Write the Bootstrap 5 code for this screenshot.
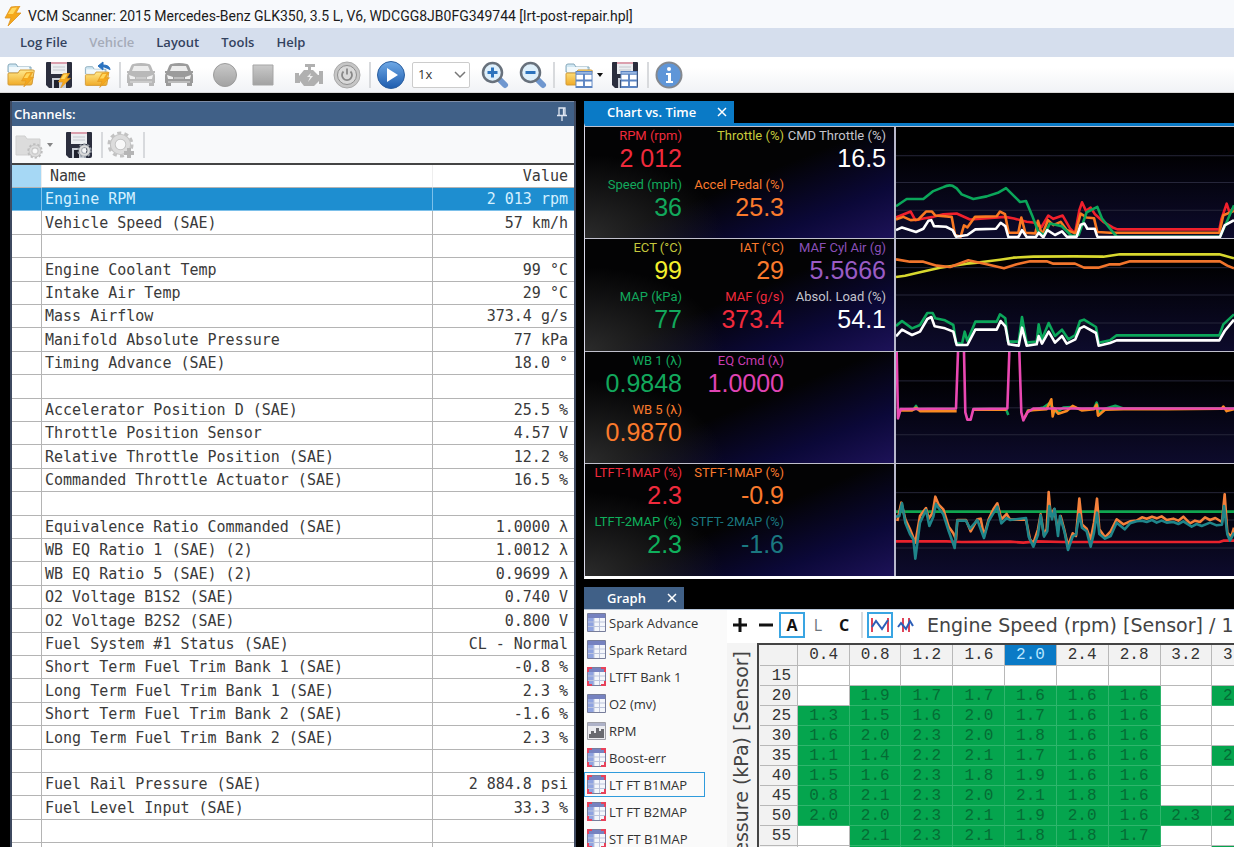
<!DOCTYPE html>
<html lang="en">
<head>
<meta charset="utf-8">
<meta name="viewport" content="width=device-width, initial-scale=1">
<title>VCM Scanner</title>
<link href="https://cdn.jsdelivr.net/npm/bootstrap@5.3.0/dist/css/bootstrap.min.css" rel="stylesheet">
<style>
:root { --ui: "Open Sans", "Noto Sans", sans-serif; --mono: "DejaVu Sans Mono", monospace; }
body { font-family: var(--ui); background: #000; color: #222; height: 100vh; overflow: hidden; }
button { border: 0; background: none; padding: 0; }
.titlebar { height: 28px; background: #f7f9fc; font: 14px/28px Roboto, "Noto Sans", sans-serif; padding: 2px 0 0 3px; gap: 5px; color: #1b1b1b; }
.menubar { height: 29px; background: #d5deed; padding-left: 20px; gap: 22px; }
.menubar a { font: 600 13px/28px var(--ui); color: #33425e; text-decoration: none; }
.menubar a.off { color: #a5abb8; }
.tools { height: 36px; background: linear-gradient(#fff 30%, #f1f3f6); padding-left: 7px; border-bottom: 1px solid #d8d8d8; }
.tools svg, .subtools svg { display: block; width: 28px; height: 28px; }
.group { display: flex; align-items: center; gap: 10px; }
.vsep { width: 2px; height: 26px; background: #d8dadd; margin: 0 6px; flex: none; }
.speed { width: 58px; height: 26px; border: 1px solid #ccc; border-radius: 2px; background: #fff; font-size: 13px; padding: 0 0 0 5px; appearance: none; color: #333; }
.pick { position: relative; margin: 0 11px 0 7px; }
.pick svg { position: absolute; right: 4px; top: 8px; width: 12px; height: 10px; pointer-events: none; }
.caret { width: 0; height: 0; border: 3px solid transparent; border-top: 4px solid #111; border-bottom: 0; }
.work { display: grid; grid-template-columns: 566fr 650fr; gap: 8px; padding: 8px 0 0 10px; flex: 1 1 0; min-height: 0; }
.work > * { min-width: 0; min-height: 0; overflow: hidden; }
.channels { border: 0 solid #3f4a60; border-width: 0 2px; background: #fff; }
.phead { height: 25px; background: #406087; color: #fff; font: 600 13px/25px var(--ui); padding: 0 8px 0 4px; margin: 0 -2px; border-top: 1px solid #7e8ea8; }
.subtools { height: 37px; background: #f8f9fa; padding-left: 3px; border-bottom: 0; }
.chan { width: 100%; table-layout: fixed; border-collapse: separate; border-spacing: 0; border-top: 2px solid #444; font: 15px/20px var(--mono); color: #3a3a3a; }
.chan td, .chan th { height: 23px; padding: 0 3px; font-weight: 400; border: 0 solid #b4b4b4; border-width: 0 0 1px 1px; white-space: nowrap; overflow: hidden; vertical-align: middle; }
.chan tbody tr:nth-child(5n+2) td, .chan tbody tr:nth-child(5n+4) td { height: 24px; }
.chan td:first-child, .chan th:first-child { border-left: 0; width: 29px; }
.chan th:first-child { background: #a6d8f5; }
.chan th { border-left-color: #eee; }
.chan th:nth-child(2) { padding-left: 8px; }
.chan .val { width: 142px; text-align: right; padding-right: 6px; }
.chan tr.sel td { background: #1e8ed0; color: #d4f0ff; border-color: #7cc0ea; }
.dtab { height: 22px; font: 600 13px/22px var(--ui); color: #fff; padding: 0 6px 0 23px; background: #0a7ac6; }
.dtab.idle { background: #406087; }
.dtab svg { width: 12px; height: 12px; display: block; }
.charts { border-top: 3px solid #0a7ac6; border-left: 1px solid #d8d8e8; border-bottom: 3px solid #fff; }
.strip { height: 112px; border-top: 1px solid #c0c0cc; display: flex; box-sizing: content-box; }
.strip:nth-child(odd) { height: 111px; }
.gauges { width: 311px; flex: none; border-right: 2px solid #b8b8cc; display: grid; grid-template-columns: repeat(3, 102px); justify-content: end; align-content: start; padding-right: 8px; text-align: right; white-space: nowrap;
  background: radial-gradient(ellipse 45% 75% at 0 100%, #2b2b2b, transparent), linear-gradient(158deg, transparent 50%, #0b0838 78%, #1d1258 100%), #030304; }
.gauge { direction: rtl; height: 49px; overflow: visible; }
.gauge > * { direction: ltr; display: block; }
.gauge dt { font: 400 13px/17px Roboto, "Liberation Sans", sans-serif; }
.gauge dd { font: 400 25px/29px "Liberation Sans", sans-serif; margin: 0; }
.plot { flex: 1 1 0; min-width: 0; background: linear-gradient(#000 20%, #0d0b2c); }
.plot svg { display: block; width: 100%; height: 100%; }
.plot path { fill: none; stroke-width: 2.6; stroke-linejoin: round; vector-effect: non-scaling-stroke; }
.plot path.ln { stroke: #26263a; stroke-width: 1; }
.graph { background: #fafafa; border-top: 1px solid #b9c6d8; flex: 1 1 0; min-height: 0; overflow: hidden; }
.glist { width: 143px; flex: none; }
.glist button { display: flex; align-items: center; gap: 3px; width: 121px; height: 25px; margin-bottom: 2px; padding-left: 2px; border: 1px solid transparent; font: 13px/22px var(--ui); color: #333; white-space: nowrap; text-align: left; }
.glist button.on { border-color: #2f9bdc; }
.glist svg { width: 19px; height: 19px; flex: none; }
.gtools { height: 33px; background: #fff; padding-bottom: 4px; white-space: nowrap; }
.gtools button { width: 26px; height: 26px; font: 700 16px/22px var(--ui); color: #111; flex: none; }
.gtools button.on { border: 2px solid #3aa5e2; }
.gtools svg { display: block; margin: auto; width: 20px; height: 20px; }
.axis { font: 19px/24px "DejaVu Sans", sans-serif; color: #444; white-space: nowrap; }
.side { width: 30px; flex: none; overflow: hidden; background: #f4f4f4; padding: 8px 0 0 2px; }
.side span { writing-mode: vertical-rl; transform: rotate(180deg); }
.gridwrap { border: solid #444; border-width: 2px 0 0 2px; overflow: hidden; flex: 1 1 0; min-width: 0; padding-left: 1px; background: #f0f0f0; }
.cells { table-layout: fixed; width: 504px; border-collapse: separate; border-spacing: 0; font: 16px/18px "Liberation Mono", monospace; }
.cells th, .cells td { height: 20px; padding: 0; text-align: center; font-weight: 400; border: 0 solid #b8b8b8; border-width: 0 1px 1px 0; width: 52px; background: #fff; color: #333; }
.cells thead th { height: 21px; background: #f2f2f2; }
.cells thead th.hot { background: #0a7ac6; color: #b8e6ff; }
.cells th:nth-child(3n) , .cells td:nth-child(3n) { width: 51px; }
.cells th:first-child { width: 38px; background: #f2f2f2; text-align: right; padding-right: 6px; font-size: 16px; }
.cells td.fill { background: #05a54e; border-color: #2fb56c; color: #056c35; }
</style>
</head>
<body class="d-flex flex-column">
<svg width="0" height="0" class="position-absolute" aria-hidden="true">
  <defs>
    <linearGradient id="yel" x1="0" y1="0" x2="0" y2="1"><stop offset="0" stop-color="#ffe98c"/><stop offset="1" stop-color="#f0ab28"/></linearGradient>
    <linearGradient id="blu" x1="0" y1="0" x2="0" y2="1"><stop offset="0" stop-color="#6fa9e6"/><stop offset="1" stop-color="#1d5cae"/></linearGradient>
    <linearGradient id="gry" x1="0" y1="0" x2="0" y2="1"><stop offset="0" stop-color="#c9c9c9"/><stop offset="1" stop-color="#a2a2a2"/></linearGradient>
    <symbol id="bolt" viewBox="0 0 20 20"><path d="M8 1l9-1-4 7h5L5 20l3-8H2z" fill="#f5a81c" stroke="#dd9422" stroke-width=".8"/><path d="M9 2l5-.5-4 6.500H5z" fill="#ffd75e"/></symbol>
    <symbol id="folder" viewBox="0 0 28 28"><path d="M1 5q0-2 2-2h6l2 3h13v5H1z" fill="#cfe6f2" stroke="#86a8ba"/><path d="M2 6h20v5H2z" fill="#f1f8fb"/><path d="M1 23V13q0-1 1-1h9l2-3h13q2 0 1 2l-2 12q0 1-2 1H2q-1 0-1-1z" fill="url(#yel)" stroke="#d39a35"/></symbol>
    <symbol id="disk" viewBox="0 0 28 28"><path d="M2 1h24q1 0 1 1v23q0 2-2 2H4l-3-3V2q0-1 1-1z" fill="#2b2e3d"/><path d="M6 1h16v12H6z" fill="#eceef1"/><path d="M6 1h16v2H6z" fill="#dba0ae"/><path d="M8 6h12M8 9h12" stroke="#c4c8ce"/><path d="M7 17h14v10H7z" fill="#c9ced6"/><path d="M9 19h5v8H9z" fill="#20222e"/></symbol>
    <symbol id="car" viewBox="0 0 28 28"><path d="M6 3q8-2 16 0 1 0 2 2l2 5h2v2h-1q1 1 1 3v7h-1v3h-5v-3H6v3H1v-3H0v-7q0-2 1-3H0v-2h2l2-5q1-2 2-2z" fill="currentColor"/><path d="M7 5h14l2 5H5z" fill="#ececec"/><path d="M2 14l6 2v2H3zM26 14l-6 2v2h5z" fill="#f0f0f0"/><path d="M9 17h10M3 21h22" stroke="#ddd"/></symbol>
    <symbol id="lens" viewBox="0 0 28 28"><path d="M19 19l5 5" stroke="#6f97cf" stroke-width="6" stroke-linecap="round"/><circle cx="11.500" cy="11.500" r="9.500" fill="#dff0fb" stroke="#68717c" stroke-width="2.500"/><path d="M6.500 11.500h10" stroke="#2d73bd" stroke-width="3"/></symbol>
    <symbol id="sheet" viewBox="0 0 18 18"><path d="M0 0h18v18H0z" fill="#5b84c2"/><path d="M1 4h7v5H1zM10 4h7v5h-7zM1 11h7v5H1zM10 11h7v5h-7z" fill="#fff"/><path d="M1 2h16" stroke="#a9c4ea" stroke-width="1.500"/></symbol>
    <symbol id="cog" viewBox="0 0 28 28"><circle cx="14" cy="14" r="12" fill="none" stroke="currentColor" stroke-width="3" stroke-dasharray="4.200 3.340"/><circle cx="14" cy="14" r="8" fill="none" stroke="currentColor" stroke-width="6"/><circle cx="14" cy="14" r="8" fill="none" stroke="#dcdcdc" stroke-width="4"/><circle cx="14" cy="14" r="4" fill="#f8f8f8"/></symbol>
    <symbol id="tbl" viewBox="0 0 19 19"><path d="M.5.5h18v18H.5z" fill="#f4f6fb" stroke="#777d9a"/><path d="M1 1h17v4H1z" fill="#7682c0"/><path d="M1 5h6v13H1z" fill="#8fa3e0"/><path d="M1 9h17M1 13.500h17M7 5v13M12.500 5v13" stroke="#bcc4dc"/></symbol>
    <symbol id="tblr" viewBox="0 0 19 19"><use href="#tbl"/><path d="M0 0h5v2H2v3H0zM19 0h-5v2h3v3h2zM0 19h5v-2H2v-3H0zM19 19h-5v-2h3v-3h2z" fill="#e8415a"/></symbol>
    <symbol id="hist" viewBox="0 0 19 19"><path d="M.5 1.500h18v17H.5z" fill="#ececf0" stroke="#a0a0a8"/><path d="M1 2h17v3H1z" fill="#aeb2c8"/><path d="M2 17v-4h2v-3h3v2h2V7h3v3h2v-2h3v9z" fill="#6a6a70"/></symbol>
    <symbol id="x" viewBox="0 0 12 12"><path d="M2 2l8 8M10 2l-8 8" stroke="currentColor" stroke-width="1.500"/></symbol>
  </defs>
</svg>

<header class="flex-shrink-0">
  <div class="titlebar d-flex"><svg width="20" height="20" class="mt-1" aria-hidden="true"><use href="#bolt"/></svg><span>VCM Scanner: 2015 Mercedes-Benz GLK350, 3.5 L, V6, WDCGG8JB0FG349744 [lrt-post-repair.hpl]</span></div>
  <nav class="menubar d-flex" aria-label="Main">
    <a href="#">Log File</a><a href="#" class="off">Vehicle</a><a href="#">Layout</a><a href="#">Tools</a><a href="#">Help</a>
  </nav>
  <div class="tools d-flex align-items-center">
    <div class="group">
      <button aria-label="Open log"><svg viewBox="0 0 28 28"><use href="#folder"/><use href="#bolt" x="13" y="10" width="15" height="17"/></svg></button>
      <button aria-label="Save log"><svg viewBox="0 0 28 28"><use href="#disk"/><use href="#bolt" x="12" y="12" width="15" height="15"/></svg></button>
      <button aria-label="Export log"><svg viewBox="0 0 28 28"><use href="#folder" y="3" width="28" height="25"/><path d="M27 9q0-5-7-5V1l-5 4 5 4V6" fill="#2b73c0" stroke="#2b73c0"/><use href="#bolt" x="13" y="11" width="15" height="16"/></svg></button>
    </div>
    <span class="vsep ms-2"></span>
    <div class="group">
      <button aria-label="Connect" style="color:#b9b9b9"><svg><use href="#car"/></svg></button>
      <button aria-label="Vehicle info" style="color:#9b9b9b"><svg><use href="#car"/></svg></button>
      <button aria-label="Record" class="ms-2"><svg viewBox="0 0 28 28"><circle cx="14" cy="14" r="11.500" fill="url(#gry)" stroke="#9c9c9c"/></svg></button>
      <button aria-label="Stop"><svg viewBox="0 0 28 28"><path d="M4 4h20v20H4z" fill="url(#gry)" stroke="#a5a5a5"/></svg></button>
      <button aria-label="Engine codes" class="ms-2"><svg viewBox="0 0 28 28"><path d="M10 3h10v3h-4v3h2l5 5h1v-4h4v13h-4v-3l-5 5H9l-4-5v2H0V12h4v3l5-6h4V6h-3z" fill="#b0b0b0"/><path d="M16 12l-4 4h3l-2 5 5-6h-3z" fill="#eee"/></svg></button>
      <button aria-label="Power"><svg viewBox="0 0 28 28"><circle cx="14" cy="14" r="13" fill="#c6c6c6" stroke="#aaa"/><circle cx="14" cy="14" r="9.500" fill="#d9d9d9" stroke="#8f8f8f"/><path d="M10.500 10.500a5 5 0 107 0M14 7.500v6" fill="none" stroke="#888" stroke-width="1.800"/></svg></button>
    </div>
    <span class="vsep ms-2"></span>
    <button aria-label="Play"><svg viewBox="0 0 28 28"><circle cx="14" cy="14" r="13.500" fill="url(#blu)" stroke="#2c5f9f"/><path d="M10 7l11 7-11 7z" fill="#fff"/></svg></button>
    <div class="pick"><select class="speed d-block" aria-label="Playback speed"><option>1x</option></select><svg viewBox="0 0 12 10" aria-hidden="true"><path d="M1 2l5 5 5-5" fill="none" stroke="#777" stroke-width="1.500"/></svg></div>
    <div class="group">
      <button aria-label="Zoom in"><svg viewBox="0 0 28 28"><use href="#lens"/><path d="M11.500 6.500v10" stroke="#2d73bd" stroke-width="3"/></svg></button>
      <button aria-label="Zoom out"><svg><use href="#lens"/></svg></button>
    </div>
    <span class="vsep"></span>
    <button aria-label="Open layout" class="d-flex align-items-center ms-1"><svg viewBox="0 0 28 28"><use href="#folder"/><use href="#sheet" x="10" y="10" width="18" height="17"/></svg><span class="caret ms-1"></span></button>
    <button aria-label="Save layout" class="ms-2"><svg viewBox="0 0 28 28"><use href="#disk"/><use href="#sheet" x="9" y="10" width="18" height="17"/></svg></button>
    <span class="vsep ms-2"></span>
    <button aria-label="Info"><svg viewBox="0 0 28 28"><circle cx="14" cy="14" r="12.500" fill="#5f96d8" stroke="#85898f" stroke-width="2"/><circle cx="14" cy="8" r="2" fill="#fff"/><path d="M11 12h5v8h2v2h-7v-2h2v-6h-2z" fill="#fff"/></svg></button>
  </div>
</header>

<main class="work">
  <section class="channels">
    <div class="phead d-flex justify-content-between align-items-center"><span>Channels:</span>
      <svg width="12" height="14" viewBox="0 0 12 14" aria-hidden="true"><path d="M3 8V1h6v7M1 8.500h10M6 9v5M7.500 1v7" fill="none" stroke="#dfe6f2" stroke-width="1.300"/></svg></div>
    <div class="subtools d-flex align-items-center">
      <button aria-label="Open channel list" class="d-flex align-items-center"><svg viewBox="0 0 28 28" color="#bdbdbd"><path d="M1 5h9l2 3h13v16H1z" fill="#dcdcdc" stroke="#cfcfcf"/><use href="#cog" x="12" y="12" width="16" height="16"/></svg><span class="caret ms-1 opacity-50"></span></button>
      <button aria-label="Save channel list" class="mx-1 ps-2"><svg viewBox="0 0 28 28" color="#9aa0a8"><use href="#disk"/><use href="#cog" x="12" y="12" width="15" height="15"/></svg></button>
      <span class="vsep mx-1"></span>
      <button aria-label="Channel settings"><svg viewBox="0 0 28 28" color="#c2c2c2"><use href="#cog" width="27" height="27"/><path d="M22 17v10M17 22h10" stroke="#b5b5b5" stroke-width="4"/></svg></button>
      <span class="vsep ms-2"></span>
    </div>
    <table class="chan"><thead><tr><th></th><th>Name</th><th class="val">Value</th></tr></thead><tbody id="channels"></tbody></table>
  </section>

  <section class="d-flex flex-column">
    <div class="d-flex flex-shrink-0"><div class="dtab d-flex align-items-center gap-3"><span class="pe-1">Chart vs. Time</span><button aria-label="Close chart" class="text-white"><svg><use href="#x"/></svg></button></div></div>
    <div class="charts flex-shrink-0">
      <div class="strip"><div class="gauges" data-g="RPM (rpm)|2 012|#f02a3c;Throttle (%)||#c8cc3c;CMD Throttle (%)|16.5|#fff|#c4c4cc;Speed (mph)|36|#12a85c;Accel Pedal (%)|25.3|#fa7a2c"></div>
        <div class="plot"><svg viewBox="18 18 1014 336" preserveAspectRatio="none" aria-hidden="true"><path class="ln" d="M18 105H1032M18 186H1032M18 270H1032"/>
        <path stroke="#f0202c" d="M18 292L62 274L76 300L100 295L130 290L160 282L200 280L240 298L345 290L372 295L410 305L435 308L455 320L475 286L490 296L518 286L540 325L555 340L568 270L576 246L588 272L602 262L615 282L640 305L668 322L682 328H988L994 298L1010 250L1018 275L1032 262"/>
        <path stroke="#f97822" d="M18 298L40 290L62 300L85 298L108 274L126 274L136 286L185 290L195 345L212 350L222 316L232 322L255 290L320 288L330 274L345 282L356 338L385 338L394 292L406 338L436 340L444 302L456 345L474 300L490 315L512 305L530 330L556 340L572 280L590 292L612 294L622 336L660 338H988L1000 285L1032 272"/>
        <path stroke="#0bA65A" d="M18 258L50 236H100L130 212L160 200Q175 192 188 196L200 204L215 222L250 236L290 228L326 216L348 203L390 245L408 242L428 290L445 335L462 345L480 310L515 318L545 348L566 345L590 276L622 260L636 295L662 328L680 350H990L1008 310L1032 255"/>
        <path stroke="#fff" d="M18 330L36 322L78 336L100 326L115 302L124 300L132 318L168 320L188 330L198 350L232 345L256 328L318 326L332 308L346 318L355 351L386 350L396 330L410 351L438 350L446 338L460 352L472 330L495 345L516 334L530 350L560 350L572 314L583 310L592 326L614 326L622 350L645 351H990L1004 316L1032 300"/></svg></div></div>
      <div class="strip"><div class="gauges" data-g="ECT (°C)|99|#f4ef2c|#c4c83c;IAT (°C)|29|#fa7a2c;MAF Cyl Air (g)|5.5666|#9a5cc4|#8a50b8;MAP (kPa)|77|#12a85c;MAF (g/s)|373.4|#f02a3c;Absol. Load (%)|54.1|#fff|#c4c4cc"></div>
        <div class="plot"><svg viewBox="18 354 1014 336" preserveAspectRatio="none" aria-hidden="true"><path class="ln" d="M18 440H1032M18 522H1032M18 606H1032"/>
        <path stroke="#d8d82e" d="M18 468L45 464L90 454L150 440L230 428L270 424L330 416L370 410L430 407L550 406L640 407L690 400H988L1032 412"/>
        <path stroke="#f0742c" d="M18 415L60 422H100L140 434L180 438L235 418L290 430L342 442L380 430L420 421H470L490 428H555L582 440H625L660 430H690L720 421H990L1012 434L1032 442"/>
        <path stroke="#0ba65a" d="M18 615L36 600L66 622L90 612L112 576H128L136 592L165 598L190 612L198 665L216 668L224 632L232 660L256 602H320L330 580L346 592L354 662L386 662L396 588L410 665L440 662L446 610L456 655L476 606L495 645L516 626L535 655L556 642L570 600L582 596L618 618L626 665L660 658L680 643H988L1000 610L1032 580"/>
        <path stroke="#fff" d="M18 646L36 626L66 642L90 632L112 594L124 588L134 616L165 622L190 632L200 672L232 672L256 626H320L332 600L346 616L356 670L386 674L396 620L410 674L440 670L446 645L456 668L476 632L495 665L516 645L530 668L556 655L570 622L582 616L618 636L626 674L660 666L680 658H988L1004 630L1032 596"/></svg></div></div>
      <div class="strip"><div class="gauges" data-g="WB 1 (λ)|0.9848|#12a85c;EQ Cmd (λ)|1.0000|#e044b4|#c83cb0;;WB 5 (λ)|0.9870|#fa7a2c"></div>
        <div class="plot"><svg viewBox="18 16 1014 338" preserveAspectRatio="none" aria-hidden="true"><path class="ln" d="M18 104H1032M18 186H1032M18 268H1032"/>
        <path stroke="#0fa65a" d="M28 190L70 192L78 180L84 190H195M250 190H348L355 208M410 196L460 185L478 172L500 200L520 185L545 184L575 190L612 188L620 170L630 205L640 190L676 180L700 188H1032"/>
        <path stroke="#f98a22" d="M28 194H66L78 186L90 196H200M250 192H350M404 215L415 194L470 190L484 160L488 212L494 188L505 204L530 196L548 180L575 194L612 190L620 176L624 210L645 192L700 190L830 190L995 189L1000 182L1010 196L1032 190"/>
        <path stroke="#ea48b2" d="M20 16L24 218L32 190L198 188L204 16M222 16L226 200L232 222L242 222L250 190L352 188L358 16M388 16L394 200L400 224L412 200L430 188H1032"/></svg></div></div>
      <div class="strip"><div class="gauges" data-g="LTFT-1MAP (%)|2.3|#f02a3c;STFT-1MAP (%)|-0.9|#fa7a2c;;LTFT-2MAP (%)|2.3|#0fb05c;STFT- 2MAP (%)|-1.6|#1a7880"></div>
        <div class="plot"><svg viewBox="18 354 1014 336" preserveAspectRatio="none" aria-hidden="true"><path class="ln" d="M18 440H1032M18 522H1032M18 606H1032"/>
        <path stroke="#e8222c" d="M18 586H170L215 588L360 587L400 590L440 586L520 588H988L1000 584H1032"/>
        <path stroke="#10a650" d="M18 497H1032"/>
        <path stroke="#f5813c" d="M22 525L34 470L46 520L60 550L76 590L90 510L108 486L116 518L128 500L136 452L146 476L160 490L176 542L190 562L198 580L202 522H228L242 556L262 520L272 518L282 570L296 520L310 490L322 472L334 520L350 504L360 521H408L420 580L430 592L444 550L452 505L462 568L470 550L476 438L482 510L492 490L504 552L512 510L522 548L534 600L548 562L558 570L568 458L576 535L590 548L602 580L612 530L621 458L628 550L645 574L662 556L680 520L700 535L720 526L740 524L756 514L770 518L786 512L800 517L815 511L830 522L850 518L865 524L880 512L900 532L915 524L930 528L945 514L960 522L976 516L996 528L1004 445L1012 560L1024 572L1032 545"/>
        <path stroke="#1f858a" d="M18 512L28 510L36 472L46 530L60 564L70 580L76 638L90 530L108 492L118 540L130 512L138 474L146 486L160 505L176 555L194 606L202 524H228L240 548L262 522L282 576L296 525L310 502L322 482L334 532L350 516L360 522L408 516L416 572L430 602L444 566L452 508L462 572L472 555L478 480L486 520L494 488L504 570L510 510L524 560L534 612L548 572L558 565L568 505L576 545L590 556L602 602L612 560L621 500L628 564L645 578L662 570L680 530L704 550L720 532L740 526L756 524L770 528L786 522L800 530L815 524L830 530L850 528L865 534L880 526L905 542L920 534L935 540L960 530L980 538L996 536L1002 480L1012 565L1020 584L1032 560"/></svg></div></div>
    </div>
    <div class="d-flex flex-shrink-0 pt-2"><div class="dtab idle d-flex align-items-center gap-3"><span class="pe-1">Graph</span><button aria-label="Close graph" class="text-white"><svg><use href="#x"/></svg></button></div></div>
    <div class="graph d-flex">
      <div class="glist" id="graphs"></div>
      <div class="d-flex flex-column flex-fill" style="min-width:0">
        <div class="gtools d-flex align-items-center flex-shrink-0">
          <button aria-label="Add"><svg viewBox="0 0 20 20"><path d="M10 3v14M3 10h14" stroke="#111" stroke-width="3"/></svg></button>
          <button aria-label="Remove"><svg viewBox="0 0 20 20"><path d="M3 10h14" stroke="#111" stroke-width="3"/></svg></button>
          <button class="on">A</button><button class="text-secondary fw-normal">L</button><button>C</button>
          <span class="vsep mx-1"></span>
          <button class="on" aria-label="Line view"><svg viewBox="0 0 20 20"><path d="M2 3v14M18 3v14" stroke="#e04458" stroke-width="2"/><path d="M2 12l4-6 6 8 6-9" fill="none" stroke="#2d5fb8" stroke-width="2"/></svg></button>
          <button aria-label="Trace view"><svg viewBox="0 0 20 20"><path d="M7 3v14M13 3v14" stroke="#e04458" stroke-width="2"/><path d="M2 12l3-4 5 6 4-8 3 5" fill="none" stroke="#2d5fb8" stroke-width="2"/></svg></button>
          <span class="axis ms-2">Engine Speed (rpm) [Sensor] / 1000</span>
        </div>
        <div class="d-flex flex-fill overflow-hidden" style="min-height:0">
          <div class="side axis"><span>Pressure (kPa) [Sensor]</span></div>
          <div class="gridwrap"><table class="cells"><thead><tr id="cols"></tr></thead><tbody id="rows"></tbody></table></div>
        </div>
      </div>
    </div>
  </section>
</main>

<script src="https://cdn.jsdelivr.net/npm/bootstrap@5.3.0/dist/js/bootstrap.bundle.min.js"></script>
<script>
const channels = `Engine RPM|2 013 rpm
Vehicle Speed (SAE)|57 km/h

Engine Coolant Temp|99 °C
Intake Air Temp|29 °C
Mass Airflow|373.4 g/s
Manifold Absolute Pressure|77 kPa
Timing Advance (SAE)|18.0 °

Accelerator Position D (SAE)|25.5 %
Throttle Position Sensor|4.57 V
Relative Throttle Position (SAE)|12.2 %
Commanded Throttle Actuator (SAE)|16.5 %

Equivalence Ratio Commanded (SAE)|1.0000 λ
WB EQ Ratio 1 (SAE) (2)|1.0012 λ
WB EQ Ratio 5 (SAE) (2)|0.9699 λ
O2 Voltage B1S2 (SAE)|0.740 V
O2 Voltage B2S2 (SAE)|0.800 V
Fuel System #1 Status (SAE)|CL - Normal
Short Term Fuel Trim Bank 1 (SAE)|-0.8 %
Long Term Fuel Trim Bank 1 (SAE)|2.3 %
Short Term Fuel Trim Bank 2 (SAE)|-1.6 %
Long Term Fuel Trim Bank 2 (SAE)|2.3 %

Fuel Rail Pressure (SAE)|2 884.8 psi
Fuel Level Input (SAE)|33.3 %

Control Module Voltage (SAE)|`.split("\n");
document.getElementById("channels").innerHTML = channels.map((c, i) => {
  const [n, v] = c.split("|");
  return `<tr${i ? "" : ' class="sel"'}><td></td><td>${n}</td><td class="val">${v || ""}</td></tr>`;
}).join("");

document.querySelectorAll(".gauges").forEach(box => {
  box.innerHTML = box.dataset.g.split(";").map(g => {
    const [label, value, color, dim] = g.split("|");
    return label ? `<dl class="gauge mb-0"><dt style="color:${dim || color}">${label}</dt><dd style="color:${color}">${value}</dd></dl>` : "<i></i>";
  }).join("");
});

const graphs = [["tbl","Spark Advance"],["tbl","Spark Retard"],["tblr","LTFT Bank 1"],["tbl","O2 (mv)"],["hist","RPM"],["tblr","Boost-err"],["tblr","LT FT B1MAP"],["tblr","LT FT B2MAP"],["tblr","ST FT B1MAP"]];
document.getElementById("graphs").innerHTML = graphs.map(([icon, name]) =>
  `<button${name === "LT FT B1MAP" ? ' class="on"' : ""}><svg><use href="#${icon}"/></svg>${name}</button>`).join("");

document.getElementById("cols").innerHTML = "<th></th>" + ["0.4","0.8","1.2","1.6","2.0","2.4","2.8","3.2","3.6"].map(c =>
  `<th${c === "2.0" ? ' class="hot"' : ""}>${c}</th>`).join("");
const rows = {
  15: ",,,,,,,,", 20: ",1.9,1.7,1.7,1.6,1.6,1.6,,2.1", 25: "1.3,1.5,1.6,2.0,1.7,1.6,1.6,,",
  30: "1.6,2.0,2.3,2.0,1.8,1.6,1.6,,", 35: "1.1,1.4,2.2,2.1,1.7,1.6,1.6,,2.0", 40: "1.5,1.6,2.3,1.8,1.9,1.6,1.6,,",
  45: "0.8,2.1,2.3,2.0,2.1,1.8,1.6,,", 50: "2.0,2.0,2.3,2.1,1.9,2.0,1.6,2.3,2.1", 55: ",2.1,2.3,2.1,1.8,1.8,1.7,,",
  60: ",2.1,2.2,2.1,1.8,1.8,1.7,,2.1"
};
document.getElementById("rows").innerHTML = Object.entries(rows).map(([k, v]) =>
  `<tr><th>${k}</th>${v.split(",").map(c => c ? `<td class="fill">${c}</td>` : "<td></td>").join("")}</tr>`).join("");
</script>
</body>
</html>
